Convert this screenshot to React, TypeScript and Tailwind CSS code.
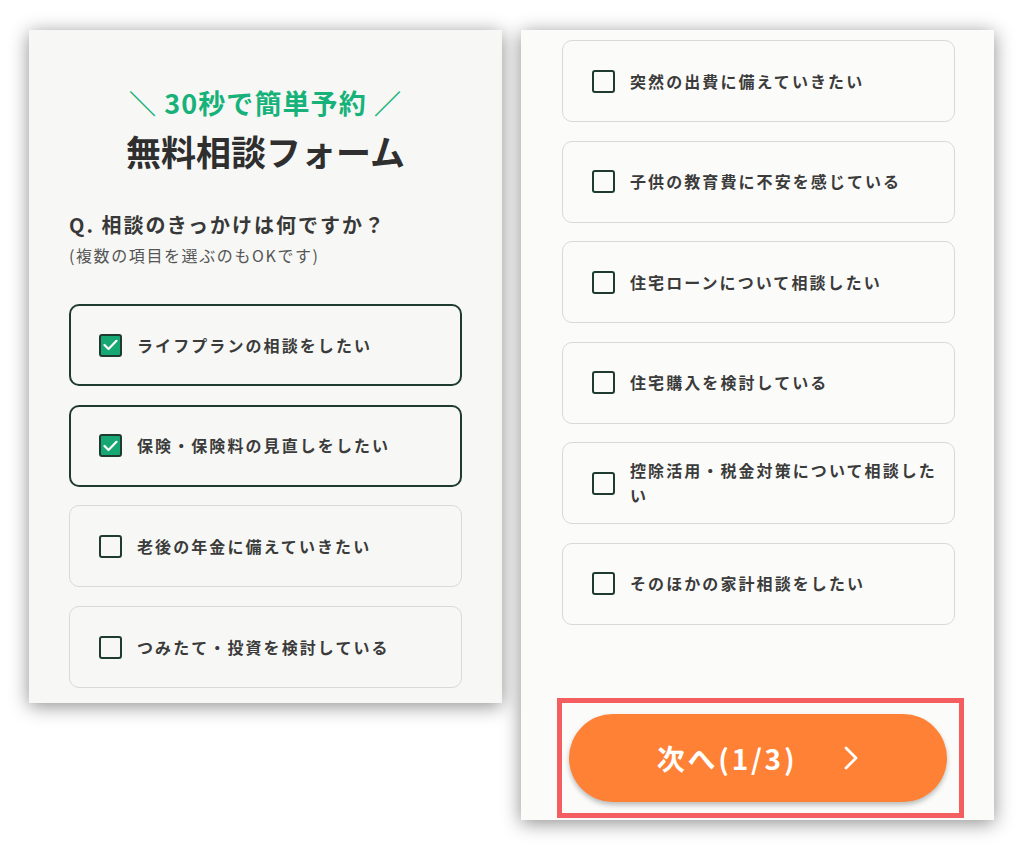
import React, { useState } from 'react';

const leftOptions = [
  'ライフプランの相談をしたい',
  '保険・保険料の見直しをしたい',
  '老後の年金に備えていきたい',
  'つみたて・投資を検討している',
];

const rightOptions = [
  '突然の出費に備えていきたい',
  '子供の教育費に不安を感じている',
  '住宅ローンについて相談したい',
  '住宅購入を検討している',
  '控除活用・税金対策について相談したい',
  'そのほかの家計相談をしたい',
];

const Checkbox: React.FC<{ checked: boolean }> = ({ checked }) => (
  <span
    className={
      'flex h-[23px] w-[23px] flex-shrink-0 items-center justify-center rounded-[3px] border-2 border-[#1f3b31] ' +
      (checked ? 'bg-[#16a772]' : 'bg-transparent')
    }
  >
    {checked && (
      <svg width="15" height="12" viewBox="0 0 15 12" fill="none">
        <polyline points="1.5,6 5.5,10 13.5,1.8" stroke="#fff" strokeWidth="2.2" strokeLinecap="round" strokeLinejoin="round" />
      </svg>
    )}
  </span>
);

const OptionCard: React.FC<{ label: string; checked: boolean; onToggle: () => void }> = ({ label, checked, onToggle }) => (
  <button
    type="button"
    onClick={onToggle}
    className={
      'flex h-[82px] w-[393px] items-center rounded-[10px] text-left ' +
      (checked ? 'border-2 border-[#1f3b31] pl-[28px] pr-[14px]' : 'border border-[#d9d9d7] pl-[29px] pr-[15px]')
    }
  >
    <Checkbox checked={checked} />
    <span className="ml-[15px] text-[16px] font-bold leading-[25px] tracking-[0.13em] text-[#3b3b3b]">{label}</span>
  </button>
);

export default function App() {
  const [selected, setSelected] = useState<string[]>([leftOptions[0], leftOptions[1]]);

  const toggle = (label: string) => {
    setSelected((prev) => (prev.includes(label) ? prev.filter((l) => l !== label) : [...prev, label]));
  };

  return (
    <div
      className="flex min-h-[850px] items-start gap-[19px] bg-white pl-[29px] pt-[30px]"
      style={{ fontFamily: '"Noto Sans CJK JP", "Noto Sans", sans-serif' }}
    >
      {/* left: header + first options */}
      <div className="flex h-[673px] w-[473px] flex-col bg-[#f7f8f5] shadow-[0_3px_18px_rgba(0,0,0,0.45)]">
        <p className="pt-[55px] text-center text-[27px] font-bold leading-[36px] tracking-[0.04em] text-[#17b27a]">
          ＼ 30秒で簡単予約 ／
        </p>
        <h1 className="mt-[8px] text-center text-[35px] font-bold leading-[44px] text-[#2f2f2f]">無料相談フォーム</h1>
        <div className="px-[40px]">
          <p className="mt-[38px] text-[20px] font-bold leading-[28px] tracking-[0.1em] text-[#383838]">
            Q. 相談のきっかけは何ですか？
          </p>
          <p className="mt-[4px] text-[16px] leading-[24px] tracking-[0.1em] text-[#555]">(複数の項目を選ぶのもOKです)</p>
          <div className="mt-[37px] flex flex-col gap-[18.7px]">
            {leftOptions.map((o) => (
              <OptionCard key={o} label={o} checked={selected.includes(o)} onToggle={() => toggle(o)} />
            ))}
          </div>
        </div>
      </div>

      {/* right: remaining options + next */}
      <div className="flex h-[790px] w-[473px] flex-col bg-[#fbfbfa] shadow-[0_3px_18px_rgba(0,0,0,0.45)]">
        <div className="ml-[41px] mt-[10px] flex flex-col gap-[18.6px]">
          {rightOptions.map((o) => (
            <OptionCard key={o} label={o} checked={selected.includes(o)} onToggle={() => toggle(o)} />
          ))}
        </div>
        <div className="ml-[36px] mt-[73px] h-[120px] w-[407px] border-[5px] border-[#f55e60] pl-[7px] pr-[12px] pt-[11px]">
          <button
            type="button"
            className="flex h-[88px] w-full items-center justify-center gap-[46px] rounded-full bg-[#ff8135] text-white shadow-[0_3px_5px_rgba(0,0,0,0.25)]"
          >
            <span className="text-[28px] font-bold tracking-[0.1em]">次へ(1/3)</span>
            <svg width="16" height="24" viewBox="0 0 16 24" fill="none">
              <polyline points="3,2 13,12 3,22" stroke="#fff" strokeWidth="2.8" strokeLinecap="round" strokeLinejoin="round" />
            </svg>
          </button>
        </div>
      </div>
    </div>
  );
}
